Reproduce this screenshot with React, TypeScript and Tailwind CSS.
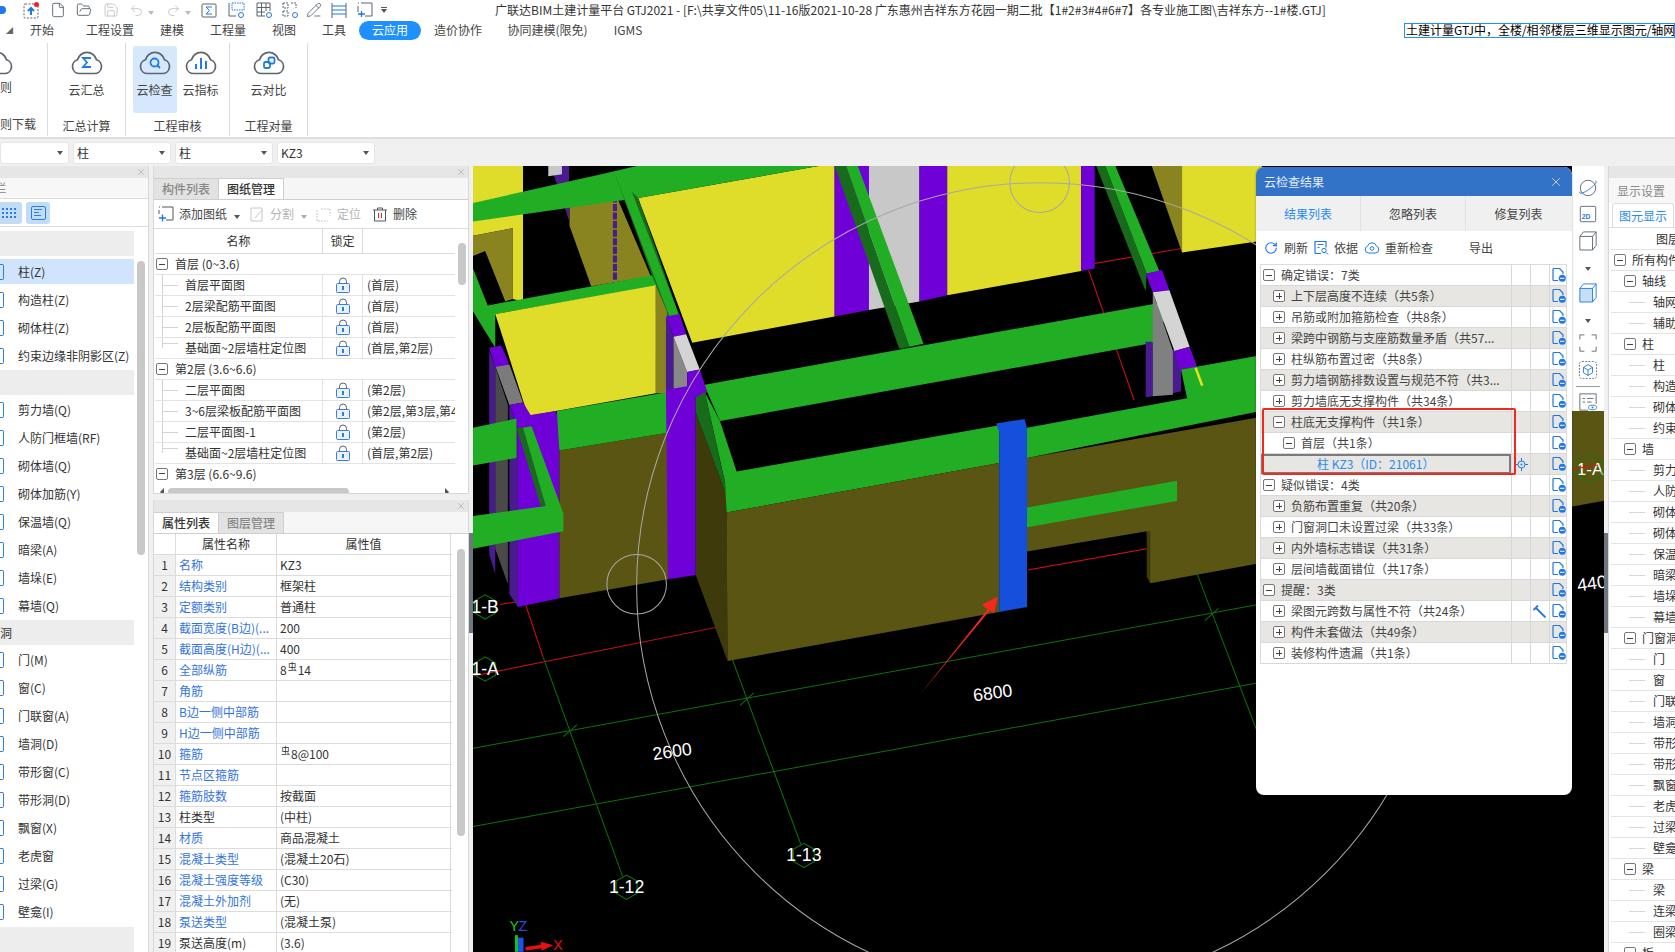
import { ChevronDown, File, FolderOpen, Save, Undo2, Redo2, PencilLine, RotateCw, X } from 'lucide-react'
import type { ReactNode } from 'react'

const tabs = ['开始', '工程设置', '建模', '工程量', '视图', '工具', '云应用', '造价协作', '协同建模(限免)', 'IGMS']
const tabW = ['w-[62px]', 'w-[74px]', 'w-[50px]', 'w-[62px]', 'w-[50px]', 'w-[50px]', 'w-[62px]', 'w-[74px]', 'w-[105px]', 'w-[56px]']

const Caret = ({ c = 'border-t-[#555]' }: { c?: string }) => (
  <span className={`inline-block w-0 h-0 border-x-[3px] border-x-transparent border-t-[4px] ${c}`} />
)

function Box({ open }: { open: boolean }) {
  return (
    <span className="shrink-0 w-[12px] h-[12px] border border-[#777] rounded-[2px] bg-white flex items-center justify-center relative">
      <span className="absolute w-[6px] h-px bg-[#444]" />
      {!open && <span className="absolute h-[6px] w-px bg-[#444]" />}
    </span>
  )
}

function Cloud({ children }: { children?: ReactNode }) {
  return (
    <svg width="34" height="28" viewBox="0 0 34 28" fill="none">
      <path d="M9.5 25.5H24.5A7 7 0 0 0 26.5 11.8A9.8 9.8 0 0 0 7.5 11.8A7 7 0 0 0 9.5 25.5Z" stroke="#5b6470" strokeWidth="1.7" />
      {children}
    </svg>
  )
}

function RibbonBtn({ label, active, children }: { label: string; active?: boolean; children: ReactNode }) {
  return (
    <div className={`flex flex-col items-center w-[44px] h-[67px] rounded-[3px] pt-[2px] ${active ? 'bg-[#d6e8fc]' : ''}`}>
      {children}
      <span className="mt-[7px] leading-[14px]">{label}</span>
    </div>
  )
}

function Group({ w, label, children }: { w: string; label: string; children: ReactNode }) {
  return (
    <div className={`${w} shrink-0 h-[93px] mt-[3px] border-r border-[#dcdcdc] flex flex-col items-center`}>
      <div className="flex gap-[2px] h-[74px] pt-[3px]">{children}</div>
      <span className="leading-[14px] mt-[2px] whitespace-nowrap">{label}</span>
    </div>
  )
}

function QuickBar() {
  const g = '#5a6470'
  return (
    <div className="flex items-center h-[20px] w-[400px] shrink-0">
      <span className="w-[6px] h-[8px] bg-[#1e7be8] rounded-r-full mr-[17px]" />
      <svg width="17" height="17" viewBox="0 0 17 17" fill="none" className="mr-[10px]">
        <rect x="1" y="2" width="14" height="14" rx="1" stroke={g} strokeDasharray="2 1.5" />
        <path d="M8 13V7M5 9l3-3 3 3" stroke="#1f78e6" strokeWidth="2" />
        <circle cx="13.5" cy="2.5" r="2.5" fill="#e8232a" />
      </svg>
      <File size={16} color={g} strokeWidth={1.4} className="mr-[10px]" />
      <FolderOpen size={16} color={g} strokeWidth={1.4} className="mr-[11px]" />
      <Save size={16} color="#c4c4c4" strokeWidth={1.4} className="mr-[10px]" />
      <Undo2 size={15} color="#c4c4c4" strokeWidth={1.4} />
      <span className="mx-[4px] mr-[12px]"><Caret c="border-t-[#bbb]" /></span>
      <Redo2 size={15} color="#c4c4c4" strokeWidth={1.4} />
      <span className="mx-[4px] mr-[10px]"><Caret c="border-t-[#bbb]" /></span>
      <svg width="16" height="16" viewBox="0 0 16 16" fill="none" className="mr-[11px]">
        <rect x="1" y="2" width="14" height="13" rx="1" stroke={g} />
        <path d="M11 5H5l3.5 3.5L5 12h6" stroke="#1f78e6" />
      </svg>
      <svg width="18" height="17" viewBox="0 0 18 17" fill="none" className="mr-[10px]">
        <path d="M1 1v13h7" stroke={g} />
        <rect x="4" y="1" width="12" height="7" stroke="#1f78e6" strokeDasharray="1.5 1" />
        <circle cx="13" cy="13" r="2.5" stroke="#1f78e6" />
      </svg>
      <svg width="17" height="17" viewBox="0 0 17 17" fill="none" className="mr-[9px]">
        <path d="M1 1h13v8M1 1v13h8M1 5.5h13M1 10h8M5.5 1v13M10 1v8" stroke={g} />
        <circle cx="13" cy="13" r="2.5" stroke="#1f78e6" />
      </svg>
      <svg width="17" height="17" viewBox="0 0 17 17" fill="none" className="mr-[7px]">
        <path d="M1 1h5v5H1zM9 1h5v5M1 9h5v5H1z" stroke={g} strokeDasharray="2 1" />
        <circle cx="13" cy="13" r="2.5" stroke="#1f78e6" />
      </svg>
      <PencilLine size={16} color={g} strokeWidth={1.3} className="mr-[9px]" />
      <svg width="16" height="17" viewBox="0 0 16 17" fill="none" className="mr-[10px]">
        <path d="M1 1v15M15 1v15" stroke={g} />
        <path d="M1 4h14M1 8h14M1 12h14" stroke="#1f78e6" />
      </svg>
      <svg width="16" height="16" viewBox="0 0 16 16" fill="none" className="mr-[8px]">
        <path d="M4 1h11v13H8M1 4v6M1 1h1" stroke={g} />
        <path d="M1 12h7M4.500 9v6" stroke="#1f78e6" strokeWidth="1.3" />
      </svg>
      <span className="flex flex-col items-center gap-[1px]"><span className="w-[6px] h-px bg-[#555]" /><Caret /></span>
    </div>
  )
}

function Ribbon() {
  return (
    <div className="h-[99px] flex border-b-2 border-[#dedede] bg-white text-[#444]">
      <div className="w-[48px] shrink-0 h-[93px] mt-[3px] border-r border-[#dcdcdc] overflow-hidden">
        <div className="h-[74px] pt-[5px] -ml-[20px]"><Cloud /></div>
        <div className="-mt-[37px] leading-[14px]">则</div>
        <div className="mt-[23px] leading-[14px] whitespace-nowrap">则下载</div>
      </div>
      <Group w="w-[78px]" label="汇总计算">
        <RibbonBtn label="云汇总">
          <Cloud><path d="M21 10h-8l4 4.500-4 4.500h8" stroke="#1f7be8" strokeWidth="1.8" /></Cloud>
        </RibbonBtn>
      </Group>
      <Group w="w-[104px]" label="工程审核">
        <RibbonBtn label="云检查" active>
          <Cloud><circle cx="16.500" cy="14.500" r="4" stroke="#1f7be8" strokeWidth="1.8" /><path d="M19.500 17.500l2.500 2.500" stroke="#1f7be8" strokeWidth="1.8" /></Cloud>
        </RibbonBtn>
        <RibbonBtn label="云指标">
          <Cloud><path d="M12 21v-5M17 21V10M22 21v-8" stroke="#1f7be8" strokeWidth="2" /></Cloud>
        </RibbonBtn>
      </Group>
      <Group w="w-[78px]" label="工程对量">
        <RibbonBtn label="云对比">
          <Cloud><rect x="12" y="14" width="6" height="6" rx="1.500" stroke="#1f7be8" strokeWidth="1.800" /><rect x="16.500" y="9.500" width="6" height="6" rx="1.500" stroke="#1f7be8" strokeWidth="1.800" /></Cloud>
        </RibbonBtn>
      </Group>
    </div>
  )
}

function Select({ text, w = 'w-[98px]' }: { text?: string; w?: string }) {
  return (
    <div className={`${w} shrink-0 h-[22px] bg-white rounded-[3px] border border-[#e6e6e6] flex items-center justify-between px-[3px] pr-[5px] text-[#333]`}>
      <span>{text}</span><Caret />
    </div>
  )
}

function Strip({ tone = 'bg-[#e6e6e6]' }: { tone?: string }) {
  return (
    <div className={`h-[12px] shrink-0 ${tone} flex items-center justify-end pr-[2px]`}>
      <X size={10} color="#a0a0a0" strokeWidth={1.5} />
    </div>
  )
}

const leftGroups: { label?: string; items: string[] }[] = [
  { items: ['柱(Z)', '构造柱(Z)', '砌体柱(Z)', '约束边缘非阴影区(Z)'] },
  { items: ['剪力墙(Q)', '人防门框墙(RF)', '砌体墙(Q)', '砌体加筋(Y)', '保温墙(Q)', '暗梁(A)', '墙垛(E)', '幕墙(Q)'] },
  { label: '洞', items: ['门(M)', '窗(C)', '门联窗(A)', '墙洞(D)', '带形窗(C)', '带形洞(D)', '飘窗(X)', '老虎窗', '过梁(G)', '壁龛(I)'] },
]

function LeftPanel() {
  return (
    <div className="w-[149px] shrink-0 flex flex-col bg-white border-r border-[#d8d8d8] overflow-hidden">
      <Strip />
      <div className="h-[21px] shrink-0 bg-[#f7f7f7] border-b border-[#dcdcdc] flex items-center -ml-[11px] text-[#888]">
        <span className="text-[12px]">&nbsp;&nbsp;栏</span>
      </div>
      <div className="h-[28px] shrink-0 border-b border-[#dcdcdc] flex items-center gap-[4px]">
        <span className="w-[22px] h-[22px] bg-[#c2dcf5] rounded-r-[3px] flex flex-col justify-center gap-[2px] pl-[2px]">
          <span className="w-[14px] border-t-2 border-dotted border-[#2a7de1]" />
          <span className="w-[14px] border-t-2 border-dotted border-[#2a7de1]" />
          <span className="w-[14px] border-t-2 border-dotted border-[#2a7de1]" />
        </span>
        <span className="w-[24px] h-[22px] bg-[#c2dcf5] rounded-[3px] flex items-center justify-center">
          <span className="w-[15px] h-[14px] border border-[#2a7de1] rounded-[2px] flex flex-col justify-center gap-[2px] pl-[2px]">
            <span className="w-[8px] h-px bg-[#2a7de1]" /><span className="w-[5px] h-px bg-[#2a7de1]" /><span className="w-[7px] h-px bg-[#2a7de1]" />
          </span>
        </span>
      </div>
      <div className="flex flex-1 min-h-0 pt-[4px]">
        <div className="w-[134px] shrink-0 flex flex-col text-[#333]">
          {leftGroups.map((g, i) => (
            <div key={i} className="flex flex-col">
              <div className={`h-[25px] bg-[#ededed] flex items-center shrink-0 ${i ? 'mt-[2px] mb-[2px]' : 'mb-[3px]'}`}>{g.label}</div>
              {g.items.map((t, j) => (
                <div key={t} className={`h-[25px] ${j < g.items.length - 1 || i === 2 ? 'mb-[3px]' : ''} flex items-center ${i === 0 && j === 0 ? 'bg-[#d0e5fd]' : ''}`}>
                  <span className="w-[4px] h-[16px] border border-l-0 border-[#2a7de1] rounded-r-[2px] shrink-0 mr-[14px]" />
                  <span className="whitespace-nowrap">{t}</span>
                </div>
              ))}
            </div>
          ))}
          <div className="h-[25px] bg-[#ededed] shrink-0" />
        </div>
        <div className="ml-[3px] mt-[30px] w-[8px] h-[294px] rounded-full bg-[#c8c8c8]" />
      </div>
    </div>
  )
}

function Lock() {
  return (
    <svg width="14" height="16" viewBox="0 0 14 16" fill="none">
      <path d="M3.500 7V4.500a3.500 3.500 0 0 1 7 0V7" stroke="#5a6470" />
      <rect x="0.500" y="6.500" width="13" height="9" rx="1" fill="#e8f1fc" stroke="#3b7de0" />
      <rect x="6" y="9" width="2" height="4" fill="#2a7de1" />
    </svg>
  )
}

const drawings: { t: string; o?: string; l?: boolean; top?: boolean }[] = [
  { t: '首层 (0~3.6)', top: true },
  { t: '首层平面图', o: '(首层)' },
  { t: '2层梁配筋平面图', o: '(首层)' },
  { t: '2层板配筋平面图', o: '(首层)' },
  { t: '基础面~2层墙柱定位图', o: '(首层,第2层)', l: true },
  { t: '第2层 (3.6~6.6)', top: true },
  { t: '二层平面图', o: '(第2层)' },
  { t: '3~6层梁板配筋平面图', o: '(第2层,第3层,第4层)' },
  { t: '二层平面图-1', o: '(第2层)' },
  { t: '基础面~2层墙柱定位图', o: '(首层,第2层)', l: true },
]

function TabHead({ a, b, first }: { a: string; b: string; first: boolean }) {
  const on = 'bg-white text-[#333] font-medium'
  const off = 'bg-[#e2e2e2] text-[#888] font-medium'
  return (
    <div className="h-[22px] shrink-0 flex border-b border-[#cfcfcf] bg-[#f6f6f6]">
      <div className={`w-[65px] flex items-center justify-center border-r border-t border-[#cfcfcf] ${first ? on : off}`}>{a}</div>
      <div className={`w-[65px] flex items-center justify-center border-r border-t border-[#cfcfcf] ${first ? off : on}`}>{b}</div>
    </div>
  )
}

function DrawingPanel() {
  return (
    <div className="h-[328px] shrink-0 flex flex-col bg-white border-x border-b border-[#d8d8d8]">
      <Strip />
      <TabHead a="构件列表" b="图纸管理" first={false} />
      <div className="h-[29px] shrink-0 flex items-center border-b border-[#dcdcdc] pl-[4px] text-[#444]">
        <svg width="16" height="16" viewBox="0 0 16 16" fill="none" className="mr-[5px]">
          <path d="M4 1h11v13H8M1 4v4M1 1h1" stroke="#555" />
          <path d="M1 12h7M4.500 8.500v7" stroke="#1f78e6" strokeWidth="1.300" />
        </svg>
        <span>添加图纸</span>
        <span className="ml-[7px] mr-[10px]"><Caret /></span>
        <svg width="15" height="15" viewBox="0 0 15 15" fill="none" className="mr-[5px]">
          <path d="M1 1h11v13H1zM5 11l7-8" stroke="#c8c8c8" />
        </svg>
        <span className="text-[#b5b5b5]">分割</span>
        <span className="ml-[7px] mr-[9px]"><Caret c="border-t-[#aaa]" /></span>
        <svg width="16" height="15" viewBox="0 0 16 15" fill="none" className="mr-[5px]">
          <path d="M1 3v11h11M5 2h9v7" stroke="#c8c8c8" strokeDasharray="2 1" />
        </svg>
        <span className="text-[#b5b5b5]">定位</span>
        <svg width="14" height="15" viewBox="0 0 14 15" fill="none" className="ml-[12px] mr-[6px]">
          <path d="M0 3h14M4.500 3V1h5v2M1.500 3v11h11V3" stroke="#555" />
          <path d="M5.500 6v5M8.500 6v5" stroke="#e8232a" />
        </svg>
        <span>删除</span>
      </div>
      <div className="flex flex-1 min-h-0">
        <div className="w-[301px] shrink-0 flex flex-col overflow-hidden text-[#333] pl-px">
          <div className="h-[25px] shrink-0 flex border-b border-[#dcdcdc]">
            <div className="w-[168px] flex items-center justify-center border-r border-[#dcdcdc]">名称</div>
            <div className="w-[40px] flex items-center justify-center border-r border-[#dcdcdc]">锁定</div>
            <div className="flex-1" />
          </div>
          {drawings.map(d => (
            <div key={d.t + d.o} className="h-[21px] shrink-0 flex border-b border-[#e3e3e3]">
              {d.top ? (
                <div className="flex items-center pl-[1px] gap-[7px] whitespace-nowrap"><Box open /><span>{d.t}</span></div>
              ) : (
                <>
                  <div className="w-[168px] shrink-0 flex items-center border-r border-[#e3e3e3] whitespace-nowrap">
                    <span className={`ml-[7px] self-stretch border-l border-[#d4d4d4] flex items-center w-[23px] shrink-0 ${d.l ? 'mb-[10px]' : ''}`}><span className="w-[15px] h-px bg-[#d4d4d4]" /></span>
                    <span>{d.t}</span>
                  </div>
                  <div className="w-[40px] shrink-0 flex items-center justify-center border-r border-[#e3e3e3]"><Lock /></div>
                  <div className="pl-[4px] flex items-center whitespace-nowrap overflow-hidden flex-1">{d.o}</div>
                </>
              )}
            </div>
          ))}
          <div className="h-[19px] shrink-0 flex items-center pl-[1px] gap-[7px] whitespace-nowrap"><Box open /><span>第3层 (6.6~9.6)</span></div>
          <div className="h-[18px] shrink-0 flex items-center pl-[5px]">
            <span className="w-0 h-0 border-y-[4px] border-y-transparent border-r-[4px] border-r-[#555] mr-[4px]" />
            <span className="w-[181px] h-[8px] rounded-full bg-[#c8c8c8]" />
            <span className="ml-[96px] w-0 h-0 border-y-[4px] border-y-transparent border-l-[4px] border-l-[#555]" />
          </div>
        </div>
        <div className="w-[14px] shrink-0 pl-[3px] pt-[14px]">
          <div className="w-[8px] h-[42px] rounded-full bg-[#c8c8c8]" />
        </div>
      </div>
    </div>
  )
}

const props: [string, ReactNode, boolean][] = [
  ['名称', 'KZ3', true],
  ['结构类别', '框架柱', true],
  ['定额类别', '普通柱', true],
  ['截面宽度(B边)(...', '200', true],
  ['截面高度(H边)(...', '400', true],
  ['全部纵筋', <>8<span className="text-[9px] relative -top-[3px] px-[1px]">虫</span>14</>, true],
  ['角筋', '', true],
  ['B边一侧中部筋', '', true],
  ['H边一侧中部筋', '', true],
  ['箍筋', <><span className="text-[9px] relative -top-[3px] px-[1px]">虫</span>8@100</>, true],
  ['节点区箍筋', '', true],
  ['箍筋肢数', '按截面', true],
  ['柱类型', '(中柱)', false],
  ['材质', '商品混凝土', true],
  ['混凝土类型', '(混凝土20石)', true],
  ['混凝土强度等级', '(C30)', true],
  ['混凝土外加剂', '(无)', true],
  ['泵送类型', '(混凝土泵)', true],
  ['泵送高度(m)', '(3.6)', false],
]

function PropPanel() {
  return (
    <div className="flex-1 min-h-0 flex flex-col bg-white border-x border-[#d8d8d8] overflow-hidden">
      <Strip />
      <TabHead a="属性列表" b="图层管理" first />
      <div className="flex flex-1 min-h-0">
        <div className="w-[298px] shrink-0 flex flex-col text-[#333]">
          <div className="h-[21px] shrink-0 flex border-b border-[#dcdcdc]">
            <div className="w-[22px] border-r border-[#dcdcdc]" />
            <div className="w-[101px] flex items-center justify-center border-r border-[#dcdcdc]">属性名称</div>
            <div className="w-[174px] flex items-center justify-center border-r border-[#dcdcdc]">属性值</div>
          </div>
          {props.map(([n, v, blue], i) => (
            <div key={n} className="h-[21px] shrink-0 flex border-b border-[#dcdcdc]">
              <div className="w-[22px] shrink-0 bg-[#f0f0f0] border-r border-[#dcdcdc] flex items-center justify-center">{i + 1}</div>
              <div className={`w-[101px] shrink-0 border-r border-[#dcdcdc] flex items-center pl-[3px] whitespace-nowrap overflow-hidden ${blue ? 'text-[#3474e0]' : ''}`}>{n}</div>
              <div className="w-[174px] shrink-0 border-r border-[#dcdcdc] flex items-center pl-[3px] whitespace-nowrap">{v}</div>
            </div>
          ))}
        </div>
        <div className="pl-[5px] pt-[15px]"><div className="w-[8px] h-[287px] rounded-full bg-[#c8c8c8]" /></div>
      </div>
    </div>
  )
}

function Hex({ x, y, t, size = 35 }: { x: number; y: number; t: string; size?: number }) {
  const r = 24
  const pts = [0, 1, 2, 3, 4, 5].map(k => `${x + r * Math.sin((k * Math.PI) / 3)},${y + r * Math.cos((k * Math.PI) / 3)}`).join(' ')
  return (
    <>
      <polygon points={pts} fill="none" stroke="#0d7a0d" strokeWidth="2" />
      <text x={x} y={y + 12} textAnchor="middle" fontSize={size} fill="#fff" fontFamily="Liberation Sans, sans-serif">{t}</text>
    </>
  )
}

function Scene() {
  const P = (c: string, p: string) => <polygon fill={c} points={p} />
  const g1 = '#21ad24'
  const g2 = '#176b1a'
  const pu = '#7000d8'
  const pd = '#4a1a90'
  const ye = '#dfdc2a'
  const ol = '#8a8420'
  const od = '#5a5512'
  const oe = '#3f3a0c'
  return (
    <svg width="1131" height="786" viewBox="0 0 1131 786" className="block">
      <rect width="1131" height="786" fill="#000" />
      <g transform="translate(-3 -6) scale(0.505)">
        {/* grid lines */}
        <g stroke="#e01010" strokeWidth="2" fill="none">
          <path d="M6 1022L490 925M60 880L110 872M1105 812L1340 770M1225 218L1315 475M1237 205L1410 175M110 880L145 985" />
        </g>
        <g stroke="#0c720c" strokeWidth="2" fill="none">
          <path d="M145 985L302 1418M520 990L655 1355M1440 820L1600 1240M6 1165L2000 800M6 1320L2000 955" />
          <path d="M185 1142L212 1118M535 1080L562 1055M1455 912L1482 888" />
        </g>

        {/* far walls */}
        {P(ye, '333,75 690,12 722,12 722,310 440,362')}
        {P(pu, '722,12 790,12 790,297 722,310')}
        {P('#c8c8c8', '790,12 890,12 890,280 790,297')}
        {P(pu, '890,12 945,12 945,268 890,280')}
        {P(ye, '945,12 1210,12 1210,220 945,268')}
        {P(pu, '1210,12 1237,12 1237,215 1210,220')}
        {P(ol, '1350,12 1410,12 1410,183')}
        {P(ye, '1410,12 1568,12 1568,160 1410,183')}
        {P(g2, '722,12 745,12 870,370 850,374')}
        {P(g1, '745,12 768,12 898,364 870,370')}
        {P(g2, '1240,12 1258,12 1340,225 1338,260')}
        {P(g1, '1258,12 1278,12 1365,220 1340,225')}

        {/* top left */}
        {P(ye, '6,12 105,12 105,280 85,275 85,135 6,150')}
        {P(ol, '6,150 85,135 85,275 70,280 30,180 6,190')}
        {P(pd, '160,12 196,12 196,120')}
        {P('#c8c8c8', '155,12 182,12 182,28 155,32')}
        {P(ol, '197,75 285,60 358,230 240,250 197,130')}
        <path d="M287 70V240" stroke="#4a1a90" strokeWidth="8" strokeDasharray="14 3" />
        {P(g1, '6,85 260,28 330,12 690,12 333,75 6,122')}
        {P(g2, '288,30 333,75 415,310 390,310')}
        {P(g1, '288,30 310,35 415,310 395,310')}

        {/* left slab */}
        {P(g1, '6,215 35,288 360,228 370,250 50,305 50,372 6,300')}
        {P(ye, '50,305 368,248 368,462 115,507')}
        {P(ol, '368,248 390,300 390,462 368,462')}
        {P(pd, '38,375 50,410 50,820 38,780')}
        {P('#4a4a4a', '50,410 75,485 75,840 50,770')}
        {P('#7b7b7b', '50,408 78,405 105,480 78,485')}
        {P(pu, '38,372 62,368 78,405 50,410')}
        {P(pd, '78,485 95,530 95,885 78,860')}
        {P(pu, '78,485 105,480 120,505 170,497 177,520 177,868 95,885 95,530')}
        {P(od, '177,575 392,540 392,830 177,868')}
        {P(g1, '172,497 390,460 392,540 177,575')}
        {P(pd, '388,310 403,350 403,455 388,455')}
        {P('#888', '403,350 430,420 430,450 403,455')}
        {P(pu, '388,310 415,305 428,345 403,350')}
        {P('#d4d4d4', '403,350 428,345 455,415 430,420')}
        {P(pu, '430,420 455,415 470,460 447,470 447,822 392,830 388,455 430,448')}

        {/* lower left beams */}
        {P(g1, '6,530 92,512 92,590 6,605')}
        {P(g2, '92,530 140,685 150,685 105,530')}
        {P(g1, '105,530 122,527 185,700 185,735 6,770 6,705 150,685')}

        {/* central */}
        {P(g1, '465,445 1370,282 1378,298 1365,360 495,517 470,460')}
        {P(g2, '850,374 870,370 880,368 860,374')}
        {P(oe, '447,500 508,665 510,992 447,822')}
        {P(g2, '447,470 465,460 505,640 508,665 447,500')}
        {P(g1, '465,460 495,517 528,617 1048,525 1048,600 508,698 505,638')}
        {P(od, '508,698 1048,600 1048,895 510,992')}

        {/* right column */}
        {P(pd, '1338,360 1352,360 1352,468 1338,470')}
        {P('#808080', '1352,262 1392,378 1392,465 1352,468')}
        {P(pd, '1392,375 1408,375 1408,458 1392,462')}
        {P(pu, '1338,225 1370,218 1385,258 1352,262')}
        {P('#d4d4d4', '1352,262 1385,258 1425,370 1395,378')}
        {P(pu, '1395,378 1425,370 1440,410 1405,415')}

        {/* right wall */}
        {P(od, '1103,590 2300,380 2300,665 1347,838 1340,735 1103,775')}
        {P(oe, '1340,735 1347,735 1347,838 1340,825')}
        {P(g1, '1408,415 2300,255 2300,350 1103,590 1103,530 1420,472')}
        <path d="M1437 412L1450 447" stroke="#e4e020" strokeWidth="5" />
        {P(g1, '1103,688 1400,635 1400,675 1103,727')}

        {/* blue column */}
        {P('#1450dc', '1042,522 1098,513 1103,530 1103,885 1048,895 1048,540')}

        {/* circles */}
        <g stroke="#a8a8a8" strokeWidth="2" fill="none">
          <circle cx="1130" cy="845" r="800" />
          <circle cx="330" cy="840" r="59" />
          <circle cx="1128" cy="45" r="59" />
        </g>

        {/* arrow */}
        {P('#f4281c', '890,1060 1025,890 1014,880 1045,865 1038,897 1029,892')}

        <Hex x={30} y={885} t="1-B" />
        <Hex x={30} y={1008} t="1-A" />
        <Hex x={661} y={1377} t="1-13" />
        <Hex x={310} y={1440} t="1-12" />
        <text x="1035" y="1067" textAnchor="middle" fontSize="35" fill="#fff" fontFamily="Liberation Sans, sans-serif" transform="rotate(-8 1035 1055)">6800</text>
        <text x="400" y="1183" textAnchor="middle" fontSize="35" fill="#fff" fontFamily="Liberation Sans, sans-serif" transform="rotate(-8 400 1170)">2600</text>

        {/* axes */}
        <path d="M100 1568V1540" stroke="#2050e8" strokeWidth="12" />
        <path d="M92 1568V1535" stroke="#10c020" strokeWidth="6" />
        <path d="M110 1562L145 1557" stroke="#e81010" strokeWidth="7" />
        {P('#e81010', '140,1548 165,1555 142,1566')}
        <text x="78" y="1527" fontSize="28" fill="#10d020" fontFamily="Liberation Sans, sans-serif">Y</text>
        <text x="96" y="1527" fontSize="28" fill="#2050e8" fontFamily="Liberation Sans, sans-serif">Z</text>
        <text x="165" y="1565" fontSize="28" fill="#e81010" fontFamily="Liberation Sans, sans-serif">X</text>
      </g>
      <text x="1117" y="309" textAnchor="middle" fontSize="17" fill="#fff" fontFamily="Liberation Sans, sans-serif">1-A</text>
      <polygon points="1117,288 1129,295 1129,309 1117,316 1105,309 1105,295" fill="none" stroke="#0d7a0d" />
      <path d="M1100 303L1125 299" stroke="#e01010" />
      <text x="1104" y="424" fontSize="18" fill="#fff" fontFamily="Liberation Sans, sans-serif" transform="rotate(-8 1115 418)">440</text>
    </svg>
  )
}

type Row = { t: string; lvl: number; open?: boolean; gray?: boolean; kz?: boolean; hammer?: boolean }
const rows: Row[] = [
  { t: '确定错误：7类', lvl: 0, open: true },
  { t: '上下层高度不连续（共5条）', lvl: 1, gray: true },
  { t: '吊筋或附加箍筋检查（共8条）', lvl: 1 },
  { t: '梁跨中钢筋与支座筋数量矛盾（共57...', lvl: 1, gray: true },
  { t: '柱纵筋布置过密（共8条）', lvl: 1 },
  { t: '剪力墙钢筋排数设置与规范不符（共3...', lvl: 1, gray: true },
  { t: '剪力墙底无支撑构件（共34条）', lvl: 1 },
  { t: '柱底无支撑构件（共1条）', lvl: 1, open: true, gray: true },
  { t: '首层（共1条）', lvl: 2, open: true },
  { t: '柱 KZ3（ID：21061）', lvl: 3, gray: true, kz: true },
  { t: '疑似错误：4类', lvl: 0, open: true },
  { t: '负筋布置重复（共20条）', lvl: 1, gray: true },
  { t: '门窗洞口未设置过梁（共33条）', lvl: 1 },
  { t: '内外墙标志错误（共31条）', lvl: 1, gray: true },
  { t: '层间墙截面错位（共17条）', lvl: 1 },
  { t: '提醒：3类', lvl: 0, open: true, gray: true },
  { t: '梁图元跨数与属性不符（共24条）', lvl: 1, hammer: true },
  { t: '构件未套做法（共49条）', lvl: 1, gray: true },
  { t: '装修构件遗漏（共1条）', lvl: 1 },
]

function DocIcon() {
  return (
    <svg width="14" height="14" viewBox="0 0 14 14" fill="none">
      <path d="M6 12.500H2a1 1 0 0 1-1-1V1.500a1 1 0 0 1 1-1h5.500L11 4v2" stroke="#1f78e6" strokeWidth="1.200" />
      <circle cx="10.300" cy="10.300" r="3.500" fill="#1f78e6" />
      <path d="M8 10.300h4.500" stroke="#fff" />
    </svg>
  )
}

function CheckPanel() {
  return (
    <div className="absolute left-[783px] top-[1px] w-[316px] h-[628px] bg-white rounded-lg shadow-[0_0_2px_rgba(0,0,0,0.4)] flex flex-col overflow-hidden text-[#444]">
      <div className="h-[29px] shrink-0 bg-[#3373c7] flex items-center justify-between pl-[8px] pr-[9px] text-[#e4ecf7]">
        <span>云检查结果</span>
        <X size={14} color="#cfdcf0" strokeWidth={1.5} />
      </div>
      <div className="h-[35px] shrink-0 bg-[#f0f0f0] flex">
        <div className="w-[105px] flex items-center justify-center border-r border-[#e2e2e2] text-[#2a8cf0]">结果列表</div>
        <div className="w-[105px] flex items-center justify-center border-r border-[#e2e2e2]">忽略列表</div>
        <div className="w-[105px] flex items-center justify-center">修复列表</div>
      </div>
      <div className="h-[33px] shrink-0 flex items-center pl-[8px]">
        <RotateCw size={14} color="#1f78e6" strokeWidth={2} className="mr-[6px]" />
        <span>刷新</span>
        <svg width="15" height="15" viewBox="0 0 15 15" fill="none" className="ml-[6px] mr-[5px]">
          <path d="M7 13.500H2a1 1 0 0 1-1-1V1.500h11v6M3.500 4.500h6M3.500 7.500h2" stroke="#1f78e6" strokeWidth="1.200" />
          <circle cx="10" cy="10.500" r="2.200" stroke="#1f78e6" /><path d="M12 12.500l2 2" stroke="#1f78e6" />
        </svg>
        <span>依据</span>
        <svg width="16" height="13" viewBox="0 0 16 13" fill="none" className="ml-[6px] mr-[5px]">
          <path d="M4.500 12H11.500A3.500 3.500 0 0 0 12.500 5.200A4.700 4.700 0 0 0 3.500 5.200A3.500 3.500 0 0 0 4.500 12Z" stroke="#1f78e6" />
          <circle cx="8" cy="7.500" r="1.800" stroke="#1f78e6" />
        </svg>
        <span>重新检查</span>
        <span className="ml-[36px]">导出</span>
      </div>
      <div className="ml-[4px] w-[307px] flex flex-col border-x border-t border-[#dcdcdc]">
        {rows.map(r => (
          <div key={r.t} className={`h-[21px] shrink-0 flex border-b border-[#d8d8d8] ${r.gray ? 'bg-[#e8e6e2]' : 'bg-white'}`}>
            <div className={`w-[250px] shrink-0 flex items-center whitespace-nowrap ${r.kz ? 'border-2 border-[#7b7b7b] text-[#2a8cf0]' : ''}`}>
              {r.lvl === 0 && <span className="ml-[2px]" />}
              {r.lvl === 1 && <span className="ml-[12px]" />}
              {r.lvl === 2 && <span className="ml-[22px]" />}
              {r.lvl === 3 && <span className="ml-[48px]" />}
              {r.lvl < 3 && <Box open={!!r.open} />}
              <span className="ml-[6px]">{r.t}</span>
            </div>
            <div className="w-[19px] shrink-0 border-l border-[#d8d8d8] flex items-center justify-center">
              {r.kz && (
                <svg width="13" height="13" viewBox="0 0 13 13" fill="none">
                  <circle cx="6.500" cy="6.500" r="3.500" stroke="#1f78e6" />
                  <circle cx="6.500" cy="6.500" r="1" fill="#1f78e6" />
                  <path d="M6.500 0v3M6.500 10v3M0 6.500h3M10 6.500h3" stroke="#1f78e6" />
                </svg>
              )}
            </div>
            <div className="w-[19px] shrink-0 border-l border-[#d8d8d8] flex items-center justify-center">
              {r.hammer && (
                <svg width="14" height="13" viewBox="0 0 14 13" fill="none">
                  <path d="M0.500 5L5 0.500M3 3l9.500 9.500" stroke="#1f78e6" strokeWidth="1.800" />
                </svg>
              )}
            </div>
            <div className="w-[18px] shrink-0 border-l border-[#d8d8d8] flex items-center justify-center"><DocIcon /></div>
          </div>
        ))}
      </div>
      <div className="absolute left-[6px] top-[241px] w-[254px] h-[67px] border-2 border-[#f02a20] rounded-[2px]" />
    </div>
  )
}

function ViewTools() {
  const s = '#5a6470'
  return (
    <div className="absolute right-0 top-0 w-[32px] h-[245px] bg-white flex flex-col items-center pt-[12px]">
      <svg width="22" height="22" viewBox="0 0 22 22" fill="none">
        <circle cx="11" cy="11" r="8.500" stroke={s} />
        <path d="M2 15C0 19 8 16 13 12S22 4 19 3" stroke="#1f78e6" />
      </svg>
      <svg width="20" height="20" viewBox="0 0 20 20" fill="none" className="mt-[7px]">
        <rect x="1.500" y="1.500" width="17" height="17" rx="1" stroke={s} />
        <text x="3" y="16" fontSize="7.500" fontWeight="bold" fill="#1f78e6" fontFamily="Liberation Sans, sans-serif">2D</text>
      </svg>
      <svg width="20" height="22" viewBox="0 0 20 22" fill="none" className="mt-[8px]">
        <path d="M1 6h14v15H1zM1 6l4-5h14v15l-4 5M15 6l4-5" stroke={s} />
      </svg>
      <span className="mt-[6px]"><Caret /></span>
      <svg width="20" height="22" viewBox="0 0 20 22" fill="none" className="mt-[8px]">
        <path d="M1 6h14v15H1z" fill="#c9def8" stroke="#1f78e6" />
        <path d="M1 6l4-5h14v15l-4 5M15 6l4-5" stroke="#1f78e6" />
      </svg>
      <span className="mt-[6px]"><Caret /></span>
      <svg width="20" height="20" viewBox="0 0 20 20" fill="none" className="mt-[7px]">
        <path d="M1 6V1h5M14 1h5v5M19 14v5h-5M6 19H1v-5" stroke={s} />
      </svg>
      <svg width="20" height="20" viewBox="0 0 20 20" fill="none" className="mt-[9px]">
        <rect x="0.500" y="0.500" width="19" height="19" rx="3" stroke={s} strokeDasharray="2 1.500" />
        <path d="M10 4l5 3v6l-5 3-5-3V7zM5 7l5 3 5-3M10 10v6" stroke="#1f78e6" />
      </svg>
      <div className="w-[24px] h-px bg-[#999] mt-[7px]" />
      <svg width="20" height="20" viewBox="0 0 20 20" fill="none" className="mt-[6px]">
        <path d="M10 19H1V1h18v11M4 6h3M9 6h7M4 10h3M9 10h5" stroke={s} />
        <ellipse cx="15" cy="16" rx="4.500" ry="2.500" stroke="#1f78e6" /><circle cx="15" cy="16" r="1" fill="#1f78e6" />
      </svg>
    </div>
  )
}

const tree: [string, number][] = [
  ['所有构件', 0], ['轴线', 1], ['轴网', 2], ['辅助轴线', 2], ['柱', 1], ['柱', 2], ['构造柱', 2], ['砌体柱', 2], ['约束边缘', 2],
  ['墙', 1], ['剪力墙', 2], ['人防门框墙', 2], ['砌体墙', 2], ['砌体加筋', 2], ['保温墙', 2], ['暗梁', 2], ['墙垛', 2], ['幕墙', 2],
  ['门窗洞', 1], ['门', 2], ['窗', 2], ['门联窗', 2], ['墙洞', 2], ['带形窗', 2], ['带形洞', 2], ['飘窗', 2], ['老虎窗', 2], ['过梁', 2], ['壁龛', 2],
  ['梁', 1], ['梁', 2], ['连梁', 2], ['圈梁', 2], ['板', 1],
]

function RightPanel() {
  return (
    <div className="w-[67px] shrink-0 flex flex-col bg-white border-l border-[#d8d8d8] overflow-hidden text-[#333]">
      <div className="h-[12px] shrink-0 bg-[#e6e6e6]" />
      <div className="h-[25px] shrink-0 bg-[#f7f7f7] flex items-center pl-[8px] text-[#888] whitespace-nowrap">显示设置</div>
      <div className="h-[25px] shrink-0 pl-[3px] flex items-end border-b border-[#dcdcdc]">
        <div className="w-[62px] h-[24px] shrink-0 border border-b-0 border-[#dcdcdc] rounded-t-[3px] flex items-center justify-center text-[#2a8cf0] whitespace-nowrap">图元显示</div>
      </div>
      <div className="h-[22px] shrink-0 flex items-center pl-[45px] border-b border-[#e3e3e3] ml-[2px] whitespace-nowrap">图层</div>
      {tree.map(([t, l], i) => (
        <div key={t + i} className="h-[21px] shrink-0 ml-[2px] border-b border-[#e3e3e3] flex items-center whitespace-nowrap">
          {l === 0 && <span className="ml-[3px]" />}
          {l === 1 && <span className="ml-[13px]" />}
          {l < 2 && <Box open />}
          {l === 2 && <span className="ml-[18px] w-[16px] h-px bg-[#d8d8d8] mr-[8px] shrink-0" />}
          <span className={l < 2 ? 'ml-[6px]' : ''}>{t}</span>
        </div>
      ))}
    </div>
  )
}

export default function App() {
  return (
    <div className="w-[1675px] h-[952px] overflow-hidden flex flex-col bg-[#f0f0f0] text-[12px] font-['Noto_Sans_CJK_SC','Noto_Sans',sans-serif] text-[#333]">
      <div className="h-[20px] shrink-0 bg-white flex items-center relative">
        <QuickBar />
        <span className="ml-[95px] whitespace-nowrap text-[#333] leading-[20px]">广联达BIM土建计量平台 GTJ2021 - [F:\共享文件05\11-16版2021-10-28 广东惠州吉祥东方花园一期二批【1#2#3#4#6#7】各专业施工图\吉祥东方--1#楼.GTJ]</span>
      </div>
      <div className="h-[20px] shrink-0 bg-white flex items-center text-[#444] overflow-hidden">
        <span className="w-[11px] shrink-0 text-[7px] text-[#666] pl-[6px]">◢</span>
        <div className="w-[1393px] flex items-center shrink-0">
          {tabs.map((t, i) => (
            <div key={t} className={`${tabW[i]} shrink-0 flex items-center justify-center whitespace-nowrap ${t === '云应用' ? 'bg-[#1e90ff] text-white rounded-full h-[19px]' : ''}`}>{t}</div>
          ))}
        </div>
        <div className="flex-1 h-[15px] border border-[#1e90ff] flex items-center pl-[1px] text-black whitespace-nowrap overflow-hidden">土建计量GTJ中，全楼/相邻楼层三维显示图元/轴网如何操作</div>
      </div>
      <Ribbon />
      <div className="h-[27px] shrink-0 flex items-center gap-[4px] pt-[1px]">
        <Select w="w-[69px]" />
        <Select text="柱" />
        <Select text="柱" />
        <Select text="KZ3" />
      </div>
      <div className="flex flex-1 min-h-0">
        <LeftPanel />
        <div className="w-[4px] shrink-0" />
        <div className="w-[316px] shrink-0 flex flex-col gap-[6px]">
          <DrawingPanel />
          <PropPanel />
        </div>
        <div className="w-[4px] shrink-0 pt-[367px]"><div className="h-[100px] bg-[#6f7680]" /></div>
        <div className="w-[1131px] shrink-0 relative overflow-hidden">
          <Scene />
          <ViewTools />
          <CheckPanel />
        </div>
        <div className="w-[4px] shrink-0 pt-[367px]"><div className="h-[100px] bg-[#6f7680]" /></div>
        <RightPanel />
      </div>
    </div>
  )
}
